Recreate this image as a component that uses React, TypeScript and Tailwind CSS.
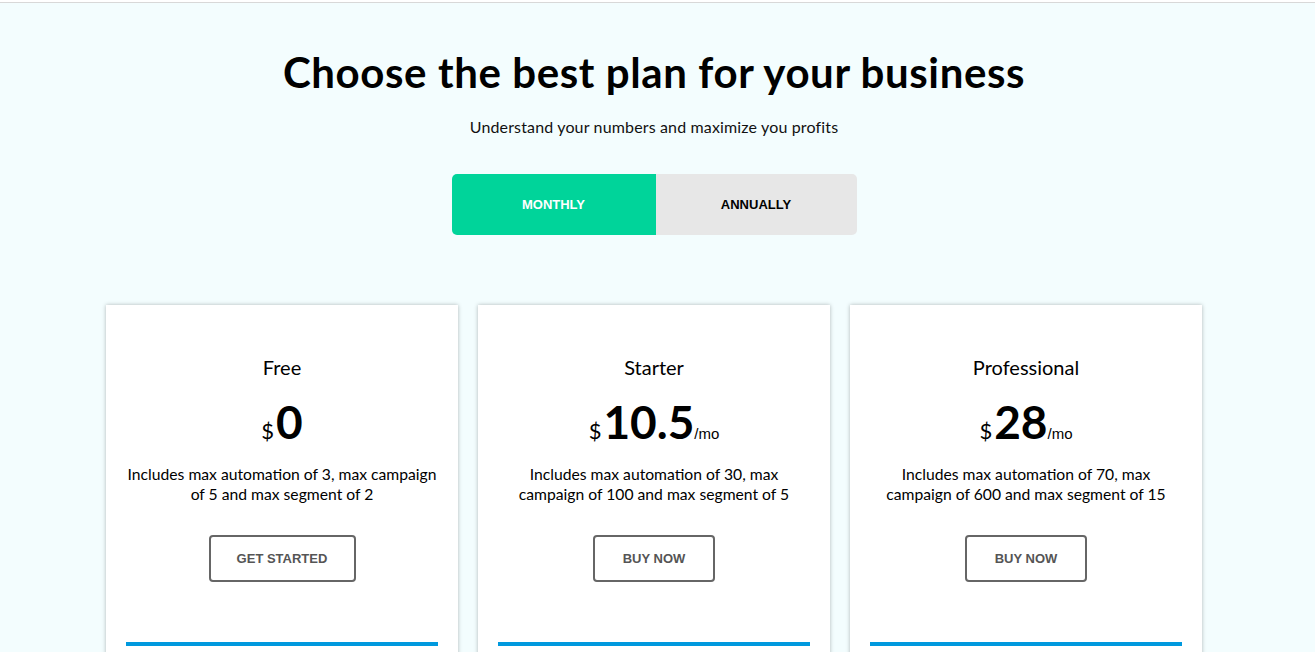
const plans = [
  {
    name: "Free",
    price: "0",
    suffix: "",
    desc: "Includes max automation of 3, max campaign of 5 and max segment of 2",
    cta: "GET STARTED",
    btnW: "w-[147px]",
  },
  {
    name: "Starter",
    price: "10.5",
    suffix: "/mo",
    desc: "Includes max automation of 30, max campaign of 100 and max segment of 5",
    cta: "BUY NOW",
    btnW: "w-[122px]",
  },
  {
    name: "Professional",
    price: "28",
    suffix: "/mo",
    desc: "Includes max automation of 70, max campaign of 600 and max segment of 15",
    cta: "BUY NOW",
    btnW: "w-[122px]",
  },
];

export default function App() {
  return (
    <div className="bg-[#f3fdfe] font-['Lato','Noto_Sans',sans-serif] text-black overflow-hidden h-[652px]">
      <div className="h-[2px] bg-white border-b border-[#d8d8d8] box-content" />
      <section className="flex flex-col items-center pt-[46px] pr-[7px]">
        <h1 className="text-[42px] leading-[46px] font-bold tracking-[0.6px]">
          Choose the best plan for your business
        </h1>
        <p className="mt-[22px] text-[16px] leading-5 tracking-[0.15px] text-[#111]">
          Understand your numbers and maximize you profits
        </p>
        <div className="mt-[37px] flex h-[61px] rounded-[5px] overflow-hidden font-['Liberation_Sans',Arial,sans-serif] text-[13px] font-bold">
          <button className="w-[204px] bg-[#00d49a] text-white">MONTHLY</button>
          <button className="w-[201px] bg-[#e7e7e7] text-black">ANNUALLY</button>
        </div>
        <div className="mt-[70px] flex gap-[20px]">
          {plans.map((p) => (
            <div
              key={p.name}
              className="w-[352px] h-[400px] bg-white shadow-[0_0_4px_rgba(0,0,0,0.28)] px-[20px] pt-[50px] flex flex-col items-center"
            >
              <div className="text-[20px] leading-6">{p.name}</div>
              <div className="mt-[16px] flex items-baseline">
                <span className="text-[22px] mr-[2px]">$</span>
                <span className="text-[46px] leading-[54px] font-bold">{p.price}</span>
                {p.suffix && <span className="text-[15px] font-['Liberation_Sans',Arial,sans-serif]">{p.suffix}</span>}
              </div>
              <p className="mt-[15px] w-[316px] text-center text-[15.7px] leading-5">{p.desc}</p>
              <button
                className={`mt-[31px] h-[47px] ${p.btnW} border-2 border-[#666] rounded-[4px] font-['Liberation_Sans',Arial,sans-serif] text-[13px] font-bold text-[#555]`}
              >
                {p.cta}
              </button>
              <div className="mt-[60px] w-full h-[4px] bg-[#0099de]" />
            </div>
          ))}
        </div>
      </section>
    </div>
  );
}
